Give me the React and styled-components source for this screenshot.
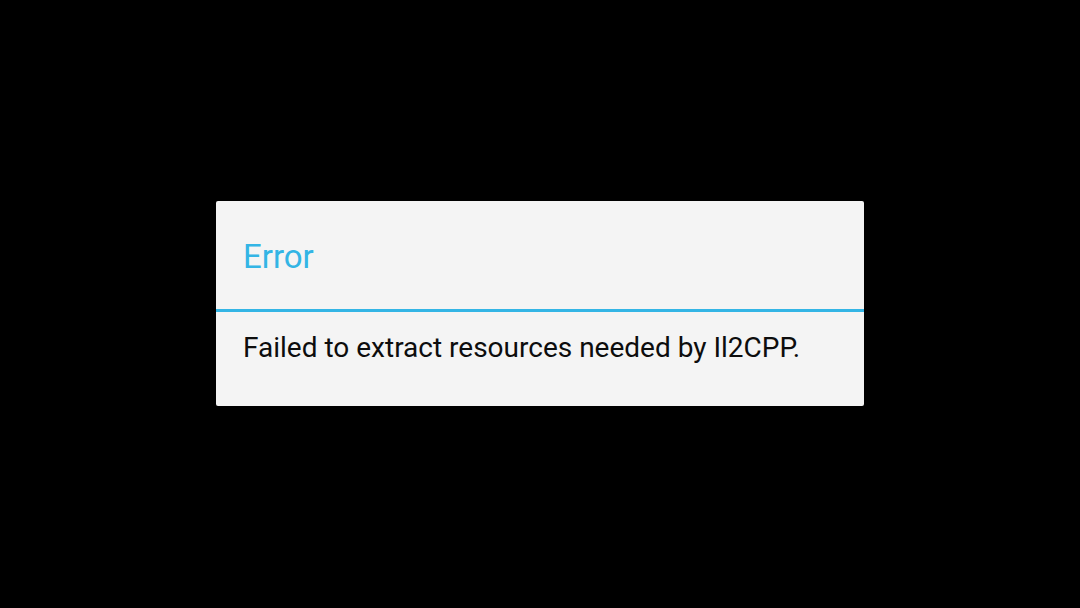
import React from "react";
import styled, { createGlobalStyle } from "styled-components";

const Global = createGlobalStyle`
  html, body { margin: 0; padding: 0; background: #000; }
  body { font-family: Roboto, "Noto Sans", sans-serif; }
`;

const Screen = styled.div`
  width: 1080px;
  height: 608px;
  background: #000;
  display: flex;
  align-items: flex-start;
  justify-content: center;
  padding-top: 201px;
  box-sizing: border-box;
`;

const Dialog = styled.div`
  width: 648px;
  height: 205px;
  background: #f4f4f4;
  border-radius: 2px;
  display: flex;
  flex-direction: column;
  box-sizing: border-box;
`;

const Header = styled.div`
  height: 108px;
  display: flex;
  align-items: center;
  padding: 0 27px;
  box-sizing: border-box;
`;

const Title = styled.h1`
  margin: 0;
  padding-top: 2px;
  font-size: 33px;
  font-weight: 400;
  color: #33b5e5;
  line-height: 1;
`;

const Divider = styled.div`
  height: 3px;
  background: #33b5e5;
`;

const Body = styled.div`
  padding: 19px 27px 0;
`;

const Message = styled.p`
  margin: 0;
  font-size: 28px;
  line-height: 34px;
  color: #0d0d0d;
`;

export default function App() {
  return (
    <>
      <Global />
      <Screen>
        <Dialog>
          <Header>
            <Title>Error</Title>
          </Header>
          <Divider />
          <Body>
            <Message>Failed to extract resources needed by Il2CPP.</Message>
          </Body>
        </Dialog>
      </Screen>
    </>
  );
}
